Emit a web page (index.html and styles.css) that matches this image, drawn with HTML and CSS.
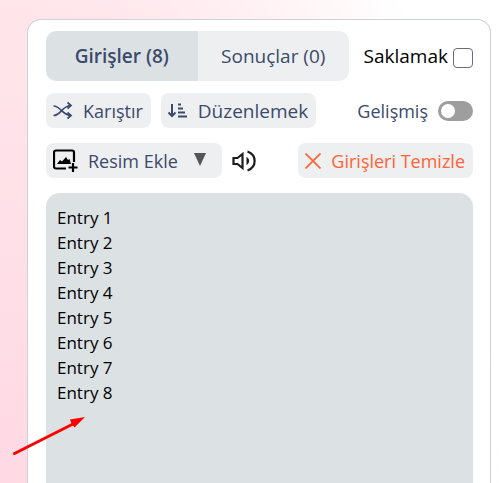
FILE: index.html
```html
<!DOCTYPE html>
<html lang="tr">
<head>
    <meta charset="UTF-8">
    <meta name="viewport" content="width=device-width, initial-scale=1.0">
    <title>Girişler</title>
    <link rel="stylesheet" href="styles.css">
</head>
<body>
    <main class="panel">
        <div class="row">
            <div class="tabs">
                <button type="button" class="tab active">Girişler (8)</button>
                <button type="button" class="tab">Sonuçlar (0)</button>
            </div>
            <label class="hide" for="hide">Saklamak
                <input type="checkbox" id="hide" class="checkbox">
            </label>
        </div>

        <div class="row">
            <div class="group">
                <button type="button" class="btn">
                    <svg class="icon" width="20" height="20" viewBox="0 0 20 20" fill="none" stroke="currentColor" stroke-width="1.7">
                        <path d="M0.500 5C8 5 9 14.500 18 14.500M0.500 14.500C8 14.500 9 4.500 18 4.500"/>
                        <path d="M14.500 1.500l3.500 3-3.500 3M14.500 11.500l3.500 3-3.500 3"/>
                    </svg>
                    Karıştır
                </button>
                <button type="button" class="btn sort">
                    <svg class="icon" width="20" height="20" viewBox="0 0 20 20" fill="none" stroke="currentColor" stroke-width="2">
                        <path d="M4 3v12M0.500 11.500L4 15l3.500-3.500"/>
                        <path d="M10 3.500h3M10 7.500h5M10 11.500h7M10 15.500h9"/>
                    </svg>
                    Düzenlemek
                </button>
            </div>
            <label class="advanced" for="advanced">Gelişmiş
                <input type="checkbox" id="advanced" class="switch" role="switch">
            </label>
        </div>

        <div class="row">
            <div class="group">
                <button type="button" class="btn image">
                    <svg class="icon" width="25" height="24" viewBox="0 0 25 24">
                        <path d="M13 19.500H3a2 2 0 0 1-2-2v-14a2 2 0 0 1 2-2h16a2 2 0 0 1 2 2V13" fill="none" stroke="#000" stroke-width="2.200"/>
                        <path d="M4 15l3-4 2 1.500L13 8l2 3 1.500-1L18 15z" fill="#000"/>
                        <path d="M20 14v9M15.500 18.500h9" stroke="#000" stroke-width="2.200"/>
                    </svg>
                    Resim Ekle
                    <svg class="arrow" width="12" height="13" viewBox="0 0 12 13"><path d="M0 0h12L6 13z" fill="#555"/></svg>
                </button>
                <button type="button" class="sound" aria-label="Ses">
                    <svg width="25" height="24" viewBox="0 0 25 24" fill="none" stroke="#1c1c1c" stroke-width="2.200">
                        <path d="M1.500 9h4L10.500 5v14L5.500 15h-4z"/>
                        <path d="M15.500 2.500c9.500 3.500 9.500 15.500 0 19"/>
                        <path d="M14.500 8v8c3.600-2 3.600-6 0-8z" fill="#1c1c1c" stroke="none"/>
                    </svg>
                </button>
            </div>
            <button type="button" class="btn clear">
                <svg class="icon" width="16" height="16" viewBox="0 0 16 16" fill="none" stroke="currentColor" stroke-width="1.700">
                    <path d="M0.500 0.500l15 15M15.500 0.500l-15 15"/>
                </svg>
                Girişleri Temizle
            </button>
        </div>

        <textarea class="entries" aria-label="Girişler" spellcheck="false">Entry 1
Entry 2
Entry 3
Entry 4
Entry 5
Entry 6
Entry 7
Entry 8</textarea>
    </main>

    <svg class="pointer" width="72" height="40" viewBox="0 0 72 40">
        <path d="M1.500 36.500L60 7" stroke="#f00" stroke-width="3" stroke-linecap="round"/>
        <path d="M72 0L57 2.500l1.500 4 3 4z" fill="#f00"/>
    </svg>
</body>
</html>
```

FILE: styles.css
```css
* { box-sizing: border-box; }
body { margin: 0; padding: 19px 10px 0 27px; height: 100vh; overflow: hidden; display: flex; font-family: "Segoe UI", "Open Sans", sans-serif; font-size: 18px; color: #3b4a6b; background: radial-gradient(ellipse 100vw 166vh at 0 100%, #ffd9e4, #ffe6eb 60%, #fff); }
button, textarea { font: inherit; color: inherit; border: 0; margin: 0; }
button { cursor: pointer; padding: 0; white-space: nowrap; }
svg { display: block; flex: none; }

.panel { flex: 1; min-width: 0; display: flex; flex-direction: column; gap: 15px; padding: 11px 17px 0 18px; background: #fff; border: 1px solid #cdd1da; border-bottom: 0; border-radius: 14px 14px 0 0; }
.row { display: flex; justify-content: space-between; align-items: center; }
.row:first-child { margin-bottom: -3px; }
.group { display: flex; align-items: center; gap: 10px; }

.tabs { display: flex; width: 303px; height: 50px; border-radius: 10px; overflow: hidden; }
.tab { flex: 1; background: #eeeff1; font-size: 19px; }
.tab.active { background: #dce1e4; font-weight: 600; }

.hide { display: flex; align-items: center; gap: 5px; color: #000; font-size: 19px; }
.checkbox { appearance: none; width: 20px; height: 20px; margin: 3px 0 0; background: #fff; border: 1px solid #6b6b7b; border-radius: 4px; }
.checkbox:checked { background: #3b4a6b; }

.btn { display: flex; align-items: center; gap: 10px; height: 35px; padding: 0 8px 0 7px; background: #eeeff1; border-radius: 8px; }
.sort { font-size: 19px; }
.image { padding-right: 16px; }
.arrow { margin: 0 0 2px 6px; }
.sound { background: none; }
.clear { color: #ff6434; }

.advanced { display: flex; align-items: center; gap: 10px; }
.switch { appearance: none; width: 35px; height: 20px; margin: 0; padding: 3px; background: #9e9e9e; border-radius: 10px; }
.switch::before { content: ""; display: block; width: 14px; height: 14px; background: #fff; border-radius: 50%; }
.switch:checked { background: #3b4a6b; }
.switch:checked::before { margin-left: 15px; }

.entries { flex: 1; width: 100%; padding: 12px 11px; resize: none; outline: none; background: #dce1e4; border-radius: 14px 14px 0 0; color: #000; font-size: 17px; line-height: 25px; }

.pointer { position: absolute; left: 13px; top: 417px; }
```
